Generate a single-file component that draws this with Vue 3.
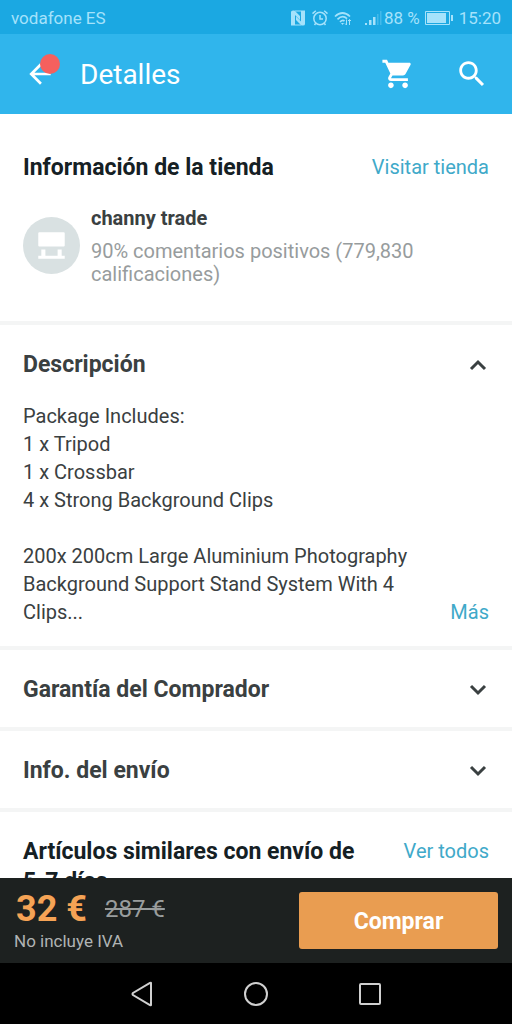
<script setup>
import { ref } from 'vue'

const descriptionOpen = ref(true)
const warrantyOpen = ref(false)
const shippingOpen = ref(false)
</script>

<template>
  <div class="screen">
    <div class="status">
      <span class="carrier">vodafone ES</span>
      <svg class="nfc" width="16" height="16" viewBox="0 0 16 16" aria-hidden="true">
        <path d="M1 15.500V2Q1 .500 3 .500h1.500l5.500 5.500v4L5 5v10.500zM15 .500V14q0 1.500-2 1.500h-1.500L6 10V6.500l5 5V.500z" fill="currentColor" />
        <path d="M5 1h6M5 15h6" stroke="currentColor" stroke-width="1" />
      </svg>
      <svg class="alarm" width="16" height="16" viewBox="0 0 16 16" fill="none" stroke="currentColor" stroke-width="1.500" aria-hidden="true">
        <circle cx="8" cy="8.500" r="6.200" />
        <path d="M8 5v4h3M.500 3.600 3.800.800M15.500 3.600 12.200.800M3.800 13.200 2.500 15M12.200 13.200l1.300 1.800" />
      </svg>
      <svg class="wifi" width="18" height="16" viewBox="0 0 18 16" fill="none" stroke="currentColor" stroke-width="1.700" aria-hidden="true">
        <path d="M1 6.500Q8.500-.500 16 6.500M3.500 9.300Q8.500 4.500 13 8.600M6 12Q8.500 9.500 10.500 11" />
        <path d="M7 13h3l-1.500 2z" fill="currentColor" stroke="none" />
        <path d="M12.500 9.500V15m-1.500-1.500 1.500 1.500M15.500 15V9.500m-1.500 1.500 1.500-1.500 1.500 1.500" stroke-width="1" />
      </svg>
      <svg class="signal" width="18" height="16" viewBox="0 0 18 16" fill="currentColor" aria-hidden="true">
        <path d="M1 13h2v2H1zM5 10h2.500v5H5zM9 7h2.500v8H9z" />
        <path d="M13 4h1.500v11H13zM16 1h1.500v14H16z" opacity=".3" />
      </svg>
      <span class="charge">88 %</span>
      <svg class="battery" width="28" height="14" viewBox="0 0 28 14" aria-hidden="true">
        <path d="M.500.500h24v13H.500z" fill="none" stroke="currentColor" />
        <path d="M2 2h19v10H2zM26 4h2v6h-2z" fill="currentColor" />
      </svg>
      <span>15:20</span>
    </div>

    <header class="toolbar">
      <button class="icon-button back" aria-label="Atrás">
        <svg width="32" height="32" viewBox="0 0 24 24" fill="currentColor" aria-hidden="true">
          <path d="M20 11H7.830l5.590-5.590L12 4l-8 8 8 8 1.410-1.410L7.830 13H20v-2z" />
        </svg>
        <span class="badge"></span>
      </button>
      <h1>Detalles</h1>
      <button class="icon-button" aria-label="Carrito">
        <svg width="34" height="34" viewBox="0 0 24 24" fill="currentColor" aria-hidden="true">
          <path d="M7 18c-1.100 0-1.990.9-1.990 2S5.900 22 7 22s2-.9 2-2-.9-2-2-2zM1 2v2h2l3.600 7.590-1.350 2.450c-.160.280-.250.610-.250.960 0 1.100.9 2 2 2h12v-2H7.420c-.140 0-.250-.110-.250-.250l.03-.120.9-1.630h7.450c.750 0 1.410-.410 1.750-1.030l3.580-6.490c.08-.140.120-.310.120-.480 0-.550-.450-1-1-1H5.210l-.940-2H1zm16 16c-1.100 0-1.990.9-1.990 2s.890 2 1.990 2 2-.9 2-2-.9-2-2-2z" />
        </svg>
      </button>
      <button class="icon-button" aria-label="Buscar">
        <svg width="34" height="34" viewBox="0 0 24 24" fill="currentColor" aria-hidden="true">
          <path d="M15.500 14h-.790l-.280-.270C15.410 12.590 16 11.110 16 9.500 16 5.910 13.090 3 9.500 3S3 5.910 3 9.500 5.910 16 9.500 16c1.610 0 3.090-.590 4.230-1.570l.270.280v.790l5 4.990L20.490 19l-4.990-5zm-6 0C7.010 14 5 11.990 5 9.500S7.010 5 9.500 5 14 7.010 14 9.500 11.990 14 9.500 14z" />
        </svg>
      </button>
    </header>

    <main class="content">
      <section class="store">
        <div class="heading">
          <h2 class="dark">Información de la tienda</h2>
          <a href="#tienda">Visitar tienda</a>
        </div>
        <div class="seller">
          <svg class="avatar" width="57" height="57" viewBox="0 0 56 56" aria-hidden="true">
            <circle cx="28" cy="28" r="28" fill="#d9e1e2" />
            <path d="M16 15h24q1 0 1 1v12q0 1-1 1H16q-1 0-1-1V16q0-1 1-1zM18 32h4v6h12v-6h4v6h3v3H15v-3h3z" fill="#fff" />
          </svg>
          <div>
            <h3>channy trade</h3>
            <p class="rating">90% comentarios positivos (779,830 calificaciones)</p>
          </div>
        </div>
      </section>

      <section class="description">
        <h2>
          <button class="toggle" :aria-expanded="descriptionOpen" @click="descriptionOpen = !descriptionOpen">
            Descripción
            <svg class="chevron" :class="{ up: descriptionOpen }" width="24" height="24" viewBox="0 0 24 24" aria-hidden="true"><path d="m5 8 7 7 7-7" /></svg>
          </button>
        </h2>
        <div v-if="descriptionOpen" class="body">
          <div class="text">
            <p>Package Includes:<br>1 x Tripod<br>1 x Crossbar<br>4 x Strong Background Clips</p>
            <p>200x 200cm Large Aluminium Photography Background Support Stand System With 4 Clips...</p>
          </div>
          <a href="#mas">Más</a>
        </div>
      </section>

      <section>
        <h2>
          <button class="toggle" :aria-expanded="warrantyOpen" @click="warrantyOpen = !warrantyOpen">
            Garantía del Comprador
            <svg class="chevron" :class="{ up: warrantyOpen }" width="24" height="24" viewBox="0 0 24 24" aria-hidden="true"><path d="m5 8 7 7 7-7" /></svg>
          </button>
        </h2>
      </section>

      <section>
        <h2>
          <button class="toggle" :aria-expanded="shippingOpen" @click="shippingOpen = !shippingOpen">
            Info. del envío
            <svg class="chevron" :class="{ up: shippingOpen }" width="24" height="24" viewBox="0 0 24 24" aria-hidden="true"><path d="m5 8 7 7 7-7" /></svg>
          </button>
        </h2>
      </section>

      <section class="similar">
        <div class="heading">
          <h2 class="dark">Artículos similares con envío de 5-7 días</h2>
          <a href="#similares">Ver todos</a>
        </div>
      </section>
    </main>

    <footer class="purchase">
      <div class="pricing">
        <div class="prices">
          <strong>32 €</strong>
          <s>287 €</s>
        </div>
        <small>No incluye IVA</small>
      </div>
      <button class="buy">Comprar</button>
    </footer>

    <nav class="system" aria-label="Sistema">
      <button aria-label="Volver">
        <svg width="26" height="26" viewBox="0 0 26 26"><path d="M22 2v22q0 .500-1 0L4 14q-1-1 0-2L21 2q1-.500 1 0z" /></svg>
      </button>
      <button aria-label="Inicio">
        <svg width="26" height="26" viewBox="0 0 26 26"><circle cx="13" cy="13" r="11" /></svg>
      </button>
      <button aria-label="Recientes">
        <svg width="26" height="26" viewBox="0 0 26 26"><rect x="3" y="3" width="20" height="20" rx="1" /></svg>
      </button>
    </nav>
  </div>
</template>

<style>
body {
  margin: 0;
}
</style>

<style scoped>
* {
  box-sizing: border-box;
}

.screen {
  display: flex;
  flex-direction: column;
  height: 100vh;
  background: #fff;
  color: #3a4041;
  font-family: Roboto, "Liberation Sans", sans-serif;
  font-size: 20px;
}

h1, h2, h3, p {
  margin: 0;
}

button {
  padding: 0;
  border: 0;
  background: none;
  color: inherit;
  font: inherit;
  cursor: pointer;
}

svg {
  display: block;
  flex: none;
}

a {
  flex: none;
  color: #40a9c9;
  line-height: 28px;
  text-decoration: none;
}

.status {
  display: flex;
  flex: none;
  align-items: center;
  height: 34px;
  padding: 2px 11px 0;
  background: #1ba8e2;
  color: #a5e2fb;
  font-size: 17px;
}

.carrier {
  flex: 1;
}

.alarm, .wifi {
  margin-left: 6px;
}

.signal {
  margin-left: 12px;
}

.charge {
  margin-left: 2px;
}

.battery {
  margin: 0 6px 0 5px;
}

.toolbar {
  display: flex;
  flex: none;
  align-items: center;
  height: 80px;
  padding: 0 23px;
  background: #30b5ec;
  color: #fff;
}

.icon-button {
  position: relative;
  display: grid;
  place-items: center;
  width: 34px;
  height: 48px;
}

.icon-button + .icon-button {
  margin-left: 40px;
}

.badge {
  position: absolute;
  top: 4px;
  right: -3px;
  width: 20px;
  height: 20px;
  border-radius: 50%;
  background: #f5605e;
}

h1 {
  flex: 1;
  margin-left: 23px;
  font-size: 28px;
  font-weight: 400;
}

.content {
  flex: 1;
  min-height: 0;
  overflow: hidden;
}

section + section {
  border-top: 4px solid #f4f5f5;
}

.heading {
  display: flex;
  justify-content: space-between;
  gap: 24px;
}

h2 {
  font-size: 23px;
  font-weight: 700;
  line-height: 30px;
}

.dark {
  color: #152024;
}

.store {
  padding: 39px 23px 35px;
}

.seller {
  display: flex;
  align-items: center;
  gap: 11px;
  margin-top: 21px;
}

h3 {
  font-size: 20px;
  font-weight: 700;
  line-height: 28px;
}

.rating {
  margin-top: 8px;
  color: #979c9d;
  line-height: 23px;
}

.toggle {
  display: flex;
  align-items: center;
  justify-content: space-between;
  width: 100%;
  height: 77px;
  padding: 2px 22px 0 23px;
  text-align: left;
}

.chevron {
  fill: none;
  stroke: currentColor;
  stroke-width: 3;
}

.chevron.up {
  transform: rotate(180deg);
}

.body {
  display: flex;
  align-items: flex-end;
  justify-content: space-between;
  gap: 24px;
  padding: 0 23px 20px;
}

.text {
  max-width: 400px;
  line-height: 28px;
}

.text p + p {
  margin-top: 28px;
}

.similar {
  padding: 25px 23px;
}

.purchase {
  display: flex;
  flex: none;
  align-items: center;
  justify-content: space-between;
  height: 85px;
  padding: 0 14px;
  background: #1d2120;
}

.prices {
  display: flex;
  align-items: center;
  gap: 18px;
  padding-left: 2px;
  line-height: 40px;
}

strong {
  color: #f5a355;
  font-size: 36px;
}

s {
  color: #999d9d;
  font-size: 24px;
}

small {
  display: block;
  color: #b0b4b4;
  font-size: 17px;
  line-height: 24px;
}

.buy {
  width: 199px;
  height: 57px;
  padding-top: 2px;
  border-radius: 3px;
  background: #e99d51;
  color: #fff;
  font-size: 23px;
  font-weight: 700;
}

.system {
  display: flex;
  flex: none;
  align-items: center;
  justify-content: center;
  gap: 88px;
  height: 61px;
  background: #000;
}

.system svg {
  fill: none;
  stroke: #d0d0d0;
  stroke-width: 2;
}
</style>
